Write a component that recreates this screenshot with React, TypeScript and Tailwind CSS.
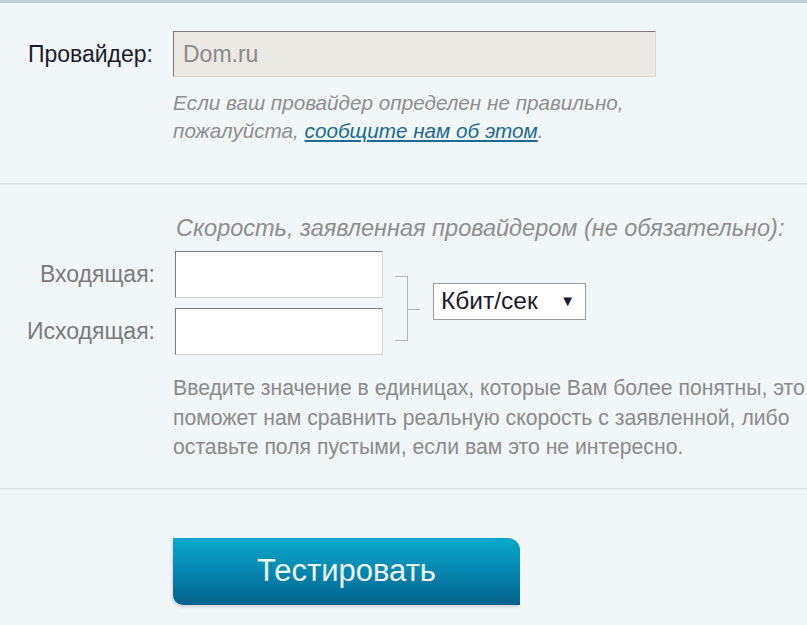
export default function App() {
  return (
    <div className="min-h-[625px] w-[807px] overflow-hidden border-t-[3px] border-[#c3cfd2] bg-[#f1f7f8] font-['Liberation_Sans',Arial,sans-serif]">
      <ProviderSection />
      <Divider />
      <SpeedSection />
      <Divider />
      <div className="pl-[173px] pt-[49px]">
        <button
          type="button"
          className="flex h-[67px] w-[347px] items-center justify-center rounded-tr-[12px] rounded-bl-[10px] bg-gradient-to-b from-[#0aa9cc] via-[#0686b0] to-[#04628c] text-[31px] text-[#eef8fb] shadow-[-1px_2px_3px_rgba(0,0,0,0.15)]"
        >
          Тестировать
        </button>
      </div>
    </div>
  );
}

function Divider() {
  return <div className="h-px bg-[#d6dfe1] shadow-[0_1px_1px_rgba(0,0,0,0.05)]" />;
}

function ProviderSection() {
  return (
    <div className="h-[180px] pt-[28px]">
      <div className="flex items-center">
        <label className="w-[173px] pr-[20px] text-right text-[23px] text-[#1c1a2c]">Провайдер:</label>
        <div className="flex h-[46px] w-[483px] items-center border border-t-[#7b7b7b] border-l-[#7b7b7b] border-b-[#d6d4cf] border-r-[#d6d4cf] bg-[#ebe9e4] px-[9px] text-[23px] text-[#8a8a8a]">
          Dom.ru
        </div>
      </div>
      <p className="mt-[12px] pl-[173px] text-[20.7px] leading-[28px] text-[#8e8e8e] italic">
        Если ваш провайдер определен не правильно,
        <br />
        пожалуйста,{" "}
        <a href="#" className="text-[#1a6a92] underline">
          сообщите нам об этом
        </a>
        .
      </p>
    </div>
  );
}

function SpeedSection() {
  return (
    <div className="h-[304px] pt-[30px]">
      <p className="pl-[176px] text-[23.5px] leading-[28px] text-[#8e8e8e] italic">
        Скорость, заявленная провайдером (не обязательно):
      </p>
      <div className="mt-[9px] flex items-center">
        <div className="flex flex-col gap-[10px]">
          <SpeedField label="Входящая:" />
          <SpeedField label="Исходящая:" />
        </div>
        <div className="mt-[10px] ml-[12px] h-[65px] w-[13px] border-y border-r border-[#b0b5b7]" />
        <div className="mt-[12px] h-px w-[12px] bg-[#b0b5b7]" />
        <div className="mb-[4px] ml-[13px] flex h-[37px] w-[153px] items-center justify-between border border-[#9a9a9a] bg-white pr-[10px] pl-[7px] text-[24.5px] text-[#1c1a2c]">
          <span>Кбит/сек</span>
          <span className="text-[15px]">▼</span>
        </div>
      </div>
      <p className="mt-[18px] pl-[173px] text-[21.2px] leading-[29.5px] text-[#8a8a8a]">
        Введите значение в единицах, которые Вам более понятны, это
        <br />
        поможет нам сравнить реальную скорость с заявленной, либо
        <br />
        оставьте поля пустыми, если вам это не интересно.
      </p>
    </div>
  );
}

function SpeedField({ label }: { label: string }) {
  return (
    <div className="flex items-center">
      <label className="w-[175px] pr-[20px] text-right text-[23px] text-[#7a7a7a]">{label}</label>
      <input
        type="text"
        className="h-[47px] w-[208px] border border-t-[#7b7b7b] border-l-[#7b7b7b] border-b-[#d0d0d0] border-r-[#d0d0d0] bg-white outline-none"
      />
    </div>
  );
}
